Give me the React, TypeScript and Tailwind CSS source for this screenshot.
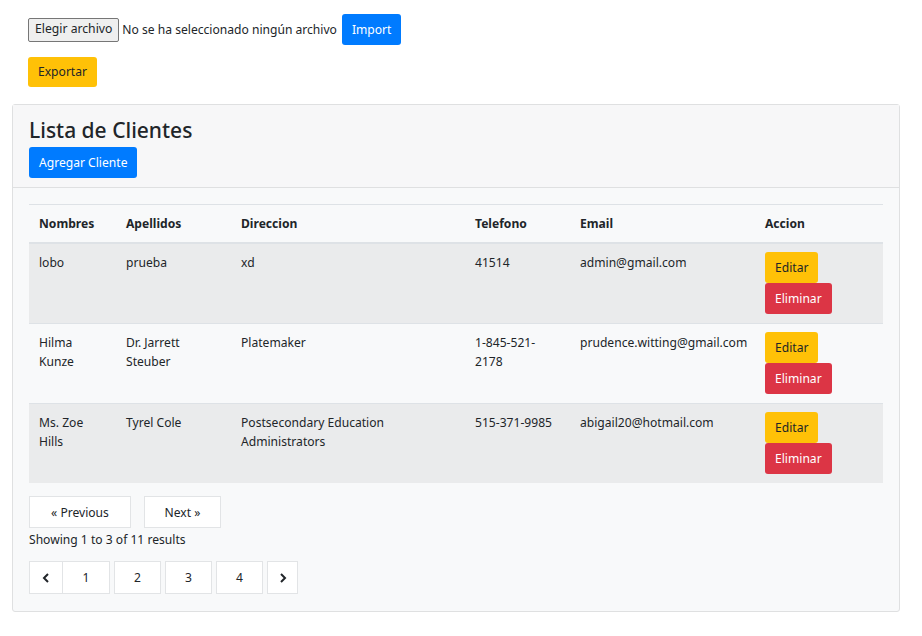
import React from "react";

type Cliente = {
  nombres: string;
  apellidos: string;
  direccion: string;
  telefono: string;
  email: string;
};

const clientes: Cliente[] = [
  { nombres: "lobo", apellidos: "prueba", direccion: "xd", telefono: "41514", email: "admin@gmail.com" },
  {
    nombres: "Hilma Kunze",
    apellidos: "Dr. Jarrett Steuber",
    direccion: "Platemaker",
    telefono: "1-845-521-2178",
    email: "prudence.witting@gmail.com",
  },
  {
    nombres: "Ms. Zoe Hills",
    apellidos: "Tyrel Cole",
    direccion: "Postsecondary Education Administrators",
    telefono: "515-371-9985",
    email: "abigail20@hotmail.com",
  },
];

const headers = ["Nombres", "Apellidos", "Direccion", "Telefono", "Email", "Accion"];

export default function App() {
  return (
    <div className="min-h-[636px] bg-white text-[#212529] text-[12.1px] leading-[19.2px] font-['Noto_Sans','Open_Sans',sans-serif]">
      {/* import / export */}
      <div className="pl-[28px] pt-[14px]">
        <div className="flex items-center">
          <button className="h-[24px] px-[6px] border border-[#767676] rounded-[2px] bg-[#efefef] text-[12.2px] leading-none">
            Elegir archivo
          </button>
          <span className="ml-[3px] text-[12.1px]">No se ha seleccionado ningún archivo</span>
          <button className="ml-[5px] h-[31px] px-[10px] rounded-[3px] bg-[#007bff] text-white">Import</button>
        </div>
        <button className="mt-[12px] h-[30px] px-[10px] rounded-[3px] bg-[#ffc107] text-[#212529]">Exportar</button>
      </div>

      {/* card */}
      <div className="mt-[17px] ml-[12px] w-[888px] border border-[#dfe0e1] rounded-[3px] bg-[#f8f9fa]">
        <div className="h-[83px] px-[16px] pt-[12px] border-b border-[#dfe0e1] bg-[#f7f7f8]">
          <h3 className="text-[21px] font-medium leading-[27px] mb-[3px]">Lista de Clientes</h3>
          <button className="h-[31px] px-[10px] rounded-[3px] bg-[#007bff] text-white">Agregar Cliente</button>
        </div>

        <div className="px-[16px] pt-[16px] pb-[17px]">
          <table className="w-[854px] table-fixed border-collapse">
            <colgroup>
              <col className="w-[87px]" />
              <col className="w-[115px]" />
              <col className="w-[234px]" />
              <col className="w-[105px]" />
              <col className="w-[185px]" />
              <col className="w-[128px]" />
            </colgroup>
            <thead>
              <tr className="border-t border-[#dee2e6]">
                {headers.map((h) => (
                  <th key={h} className="px-[10px] py-[9px] text-left font-bold border-b-2 border-[#dee2e6]">
                    {h}
                  </th>
                ))}
              </tr>
            </thead>
            <tbody>
              {clientes.map((c, i) => (
                <tr key={c.email} className={`border-t border-[#dee2e6] ${i % 2 === 0 ? "bg-[#eaebec]" : ""}`}>
                  <td className="px-[10px] pt-[9px] align-top">{c.nombres}</td>
                  <td className="px-[10px] pt-[9px] align-top">{c.apellidos}</td>
                  <td className="px-[10px] pt-[9px] align-top">{c.direccion}</td>
                  <td className="px-[10px] pt-[9px] align-top">{c.telefono}</td>
                  <td className="px-[10px] pt-[9px] align-top">{c.email}</td>
                  <td className="px-[10px] pt-[8px] pb-[9px] align-top">
                    <div className="flex flex-col items-start">
                      <button className="h-[31px] px-[10px] rounded-[3px] bg-[#ffc107] text-[#212529]">Editar</button>
                      <button className="h-[31px] px-[10px] rounded-[3px] bg-[#dc3545] text-white">Eliminar</button>
                    </div>
                  </td>
                </tr>
              ))}
            </tbody>
          </table>

          {/* simple pagination */}
          <div className="mt-[13px] flex gap-[13px]">
            <button className="h-[32px] w-[102px] border border-[#e2e4e6] bg-white text-[#212529]">« Previous</button>
            <button className="h-[32px] w-[77px] border border-[#e2e4e6] bg-white text-[#212529]">Next »</button>
          </div>
          <p className="mt-[2px]">Showing 1 to 3 of 11 results</p>

          <div className="mt-[12px] flex items-center">
            <button className="h-[33px] w-[34px] border border-[#e2e4e6] bg-white flex items-center justify-center">
              <svg width="8" height="10" viewBox="0 0 8 10" fill="none" stroke="#212529" strokeWidth="2">
                <path d="M6 1 L2 5 L6 9" />
              </svg>
            </button>
            <button className="h-[33px] w-[47px] border border-l-0 border-[#e2e4e6] bg-white">1</button>
            <button className="ml-[4px] h-[33px] w-[47px] border border-[#e2e4e6] bg-white">2</button>
            <button className="ml-[4px] h-[33px] w-[47px] border border-[#e2e4e6] bg-white">3</button>
            <button className="ml-[4px] h-[33px] w-[47px] border border-[#e2e4e6] bg-white">4</button>
            <button className="ml-[4px] h-[33px] w-[31px] border border-[#e2e4e6] bg-white flex items-center justify-center">
              <svg width="8" height="10" viewBox="0 0 8 10" fill="none" stroke="#212529" strokeWidth="2">
                <path d="M2 1 L6 5 L2 9" />
              </svg>
            </button>
          </div>
        </div>
      </div>
    </div>
  );
}
